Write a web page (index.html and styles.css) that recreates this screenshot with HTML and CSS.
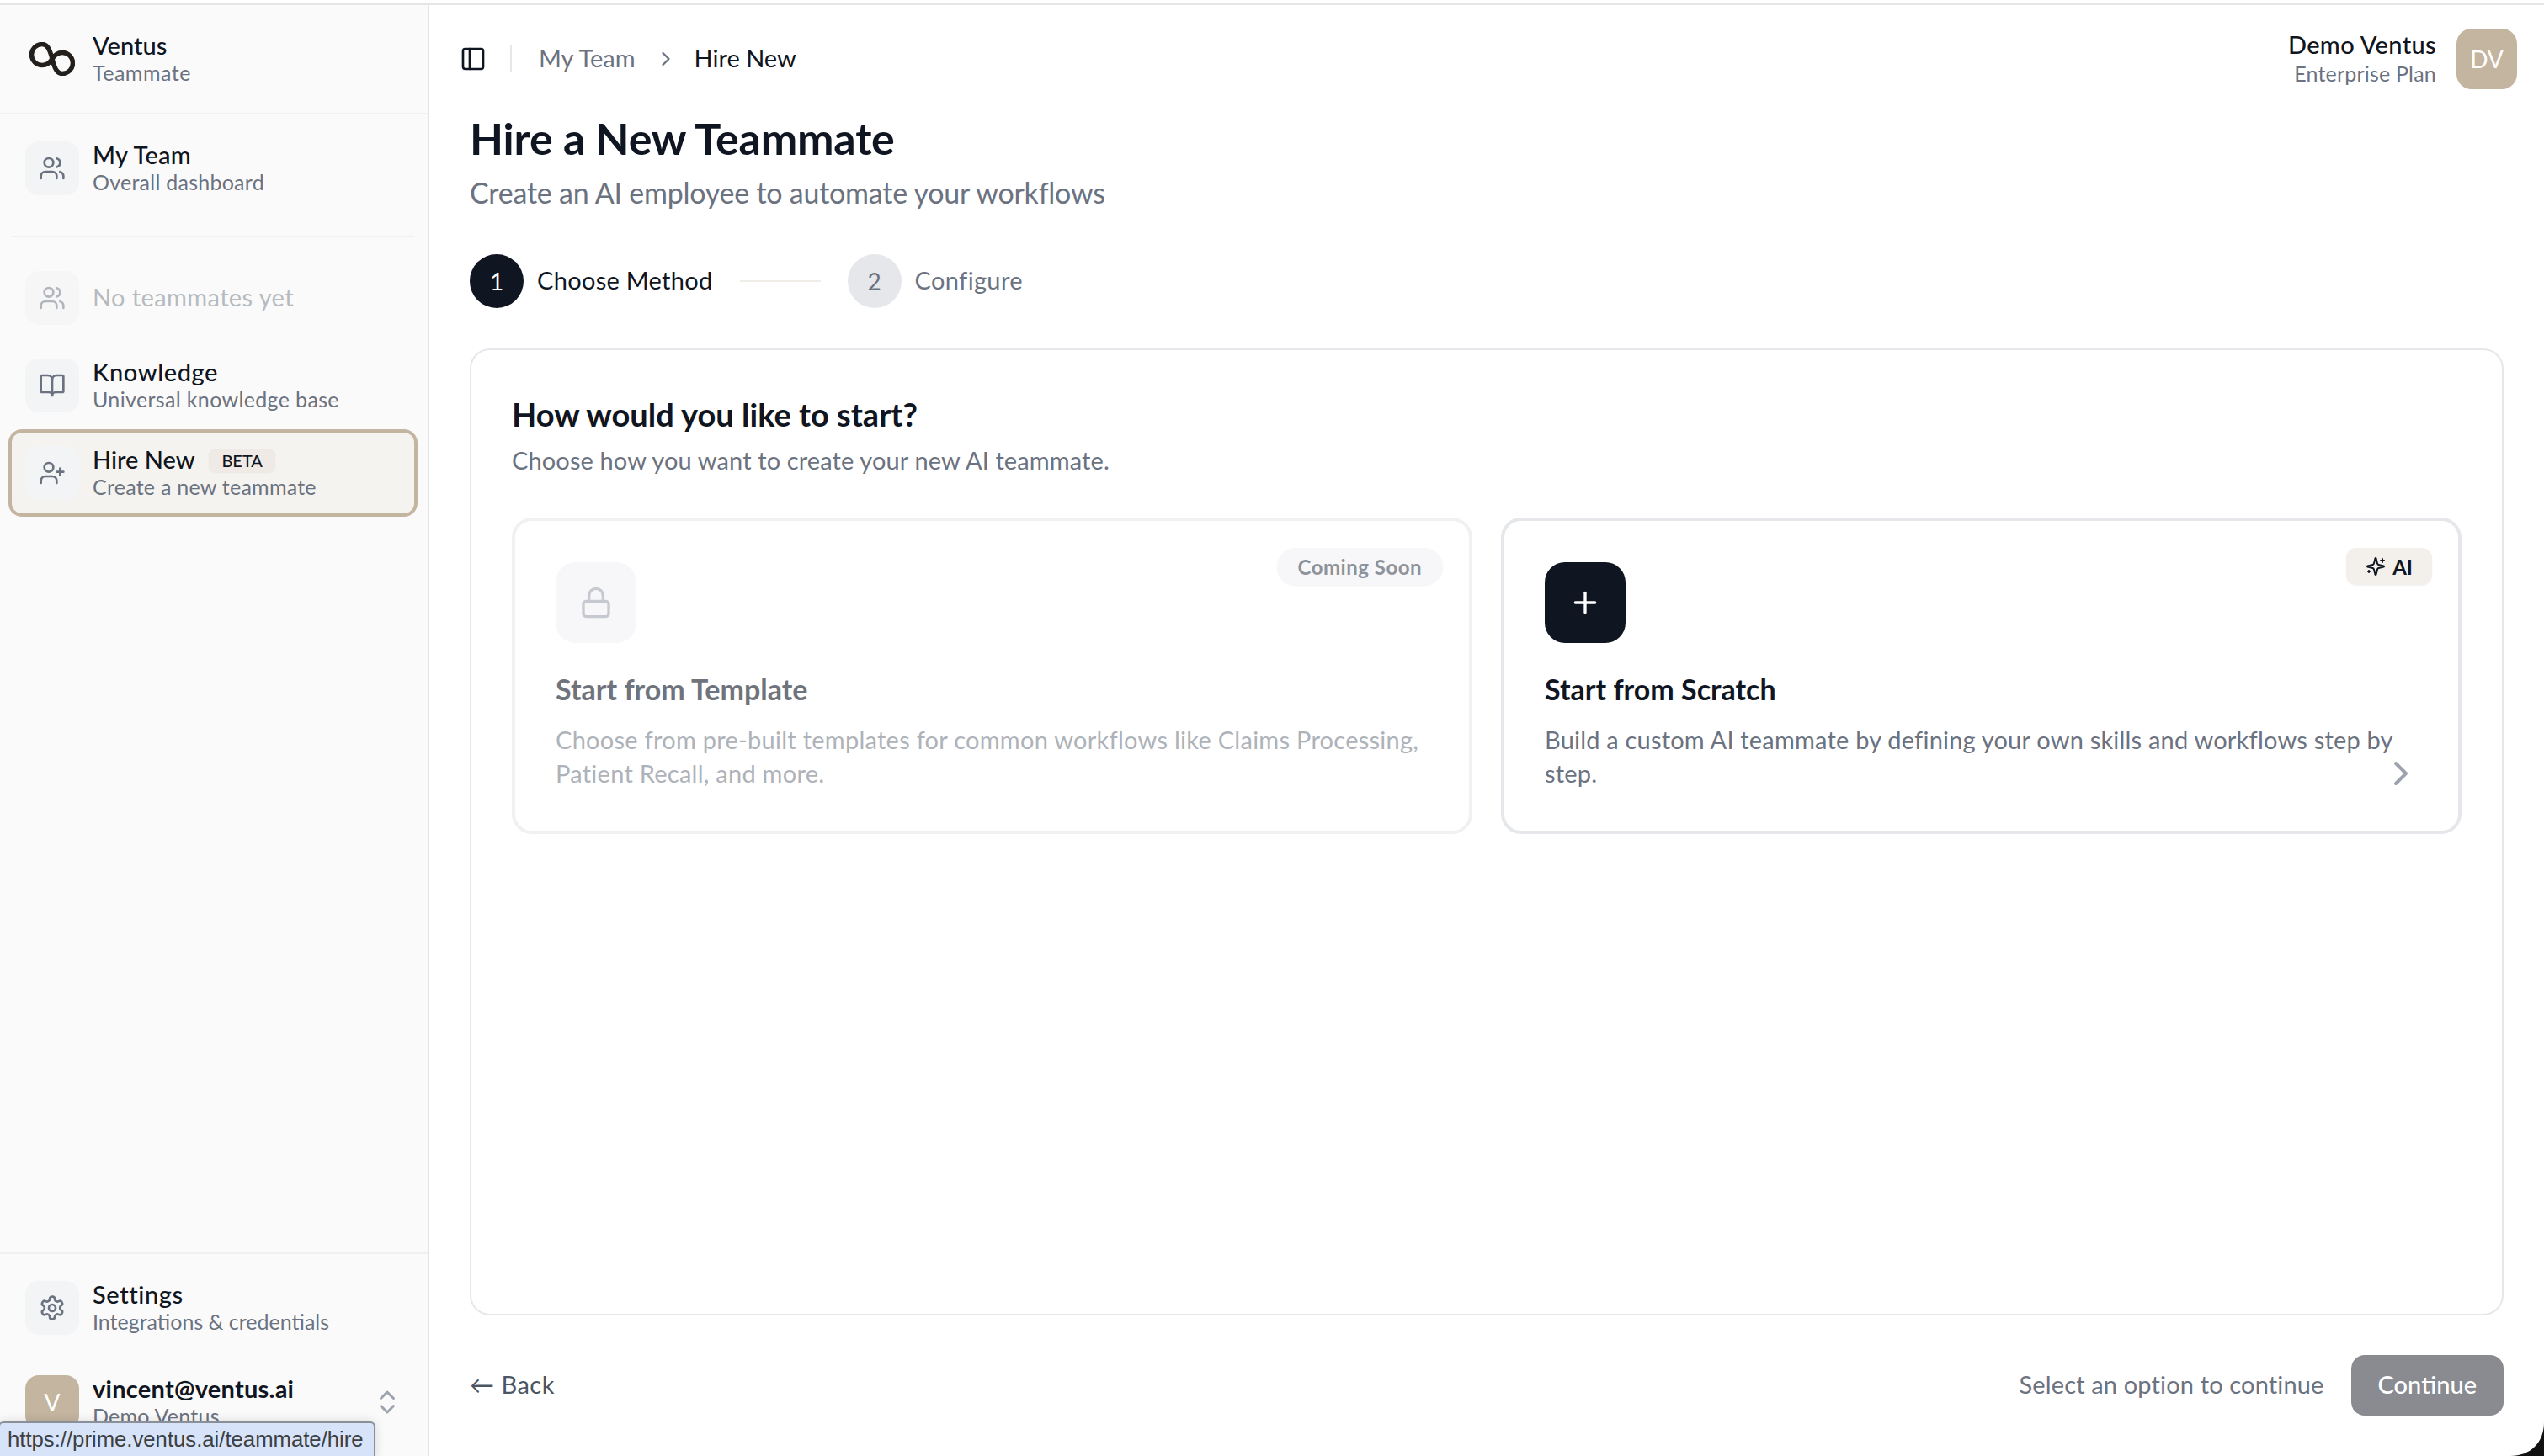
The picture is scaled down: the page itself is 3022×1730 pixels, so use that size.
FILE: index.html
```html
<!DOCTYPE html>
<html lang="en">
<head>
  <meta charset="UTF-8">
  <title>Hire New</title>
  <link rel="stylesheet" href="styles.css">
</head>
<body>

  <div class="app">

    <!-- sidebar -->
    <aside class="sidebar">
      <div class="brand">
        <svg class="logo" viewBox="0 0 54 40" fill="none" stroke="#231f1c" stroke-width="5.5"><path d="M15 2.5C21 2.5 24 8 27 20C30 32 33 37.5 39 37.5C46 37.5 51.5 32 51.5 25C51.5 18 46 12.5 39 12.5C33 12.5 30 15 27 20C24 25 21 27.5 15 27.5C8 27.5 2.5 22 2.5 15C2.5 8 8 2.5 15 2.5Z"/></svg>
        <div class="item-text">
          <div class="item-title title-brand">Ventus</div>
          <div class="item-sub sub-brand">Teammate</div>
        </div>
      </div>

      <div class="nav-top">
        <div class="nav-item">
          <span class="nav-icon">
            <svg class="icon" viewBox="0 0 24 24"><path d="M16 21v-2a4 4 0 0 0-4-4H6a4 4 0 0 0-4 4v2"/><circle cx="9" cy="7" r="4"/><path d="M22 21v-2a4 4 0 0 0-3-3.87"/><path d="M16 3.13a4 4 0 0 1 0 7.75"/></svg>
          </span>
          <div class="item-text">
            <div class="item-title title-team">My Team</div>
            <div class="item-sub sub-team">Overall dashboard</div>
          </div>
        </div>
      </div>

      <div class="nav-divider"></div>

      <div class="nav-list">
        <div class="nav-item nav-empty">
          <span class="nav-icon">
            <svg class="icon" viewBox="0 0 24 24"><path d="M16 21v-2a4 4 0 0 0-4-4H6a4 4 0 0 0-4 4v2"/><circle cx="9" cy="7" r="4"/><path d="M22 21v-2a4 4 0 0 0-3-3.87"/><path d="M16 3.13a4 4 0 0 1 0 7.75"/></svg>
          </span>
          <div class="item-title title-empty">No teammates yet</div>
        </div>

        <div class="nav-item">
          <span class="nav-icon">
            <svg class="icon" viewBox="0 0 24 24"><path d="M12 7v14"/><path d="M3 18a1 1 0 0 1-1-1V4a1 1 0 0 1 1-1h5a4 4 0 0 1 4 4 4 4 0 0 1 4-4h5a1 1 0 0 1 1 1v13a1 1 0 0 1-1 1h-6a3 3 0 0 0-3 3 3 3 0 0 0-3-3z"/></svg>
          </span>
          <div class="item-text">
            <div class="item-title title-know">Knowledge</div>
            <div class="item-sub sub-know">Universal knowledge base</div>
          </div>
        </div>

        <div class="nav-item nav-active">
          <span class="nav-icon">
            <svg class="icon" viewBox="0 0 24 24"><path d="M16 21v-2a4 4 0 0 0-4-4H6a4 4 0 0 0-4 4v2"/><circle cx="9" cy="7" r="4"/><line x1="19" y1="8" x2="19" y2="14"/><line x1="22" y1="11" x2="16" y2="11"/></svg>
          </span>
          <div class="item-text">
            <div class="item-title title-hire">Hire New <span class="beta">BETA</span></div>
            <div class="item-sub sub-hire">Create a new teammate</div>
          </div>
        </div>
      </div>

      <div class="sidebar-foot">
        <div class="nav-item">
          <span class="nav-icon">
            <svg class="icon" viewBox="0 0 24 24"><path d="M12.22 2h-.44a2 2 0 0 0-2 2v.18a2 2 0 0 1-1 1.73l-.43.25a2 2 0 0 1-2 0l-.15-.08a2 2 0 0 0-2.73.73l-.22.38a2 2 0 0 0 .73 2.73l.15.1a2 2 0 0 1 1 1.72v.51a2 2 0 0 1-1 1.74l-.15.09a2 2 0 0 0-.73 2.73l.22.38a2 2 0 0 0 2.73.73l.15-.08a2 2 0 0 1 2 0l.43.25a2 2 0 0 1 1 1.73V20a2 2 0 0 0 2 2h.44a2 2 0 0 0 2-2v-.18a2 2 0 0 1 1-1.73l.43-.25a2 2 0 0 1 2 0l.15.08a2 2 0 0 0 2.73-.73l.22-.39a2 2 0 0 0-.73-2.73l-.15-.08a2 2 0 0 1-1-1.74v-.5a2 2 0 0 1 1-1.74l.15-.09a2 2 0 0 0 .73-2.73l-.22-.38a2 2 0 0 0-2.73-.73l-.15.08a2 2 0 0 1-2 0l-.43-.25a2 2 0 0 1-1-1.73V4a2 2 0 0 0-2-2z"/><circle cx="12" cy="12" r="3"/></svg>
          </span>
          <div class="item-text">
            <div class="item-title title-settings">Settings</div>
            <div class="item-sub sub-settings">Integrations &amp; credentials</div>
          </div>
        </div>

        <div class="nav-item nav-user">
          <span class="nav-icon user-avatar">V</span>
          <div class="item-text">
            <div class="item-title title-user">vincent@ventus.ai</div>
            <div class="item-sub sub-user">Demo Ventus</div>
          </div>
          <svg class="updown" viewBox="0 0 24 24"><path d="m7 15 5 5 5-5"/><path d="m7 9 5-5 5 5"/></svg>
        </div>
      </div>
    </aside>

    <!-- main -->
    <main class="main">
      <header class="topbar">
        <svg class="toggle" viewBox="0 0 24 24"><rect x="3" y="3" width="18" height="18" rx="2"/><path d="M9 3v18"/></svg>
        <span class="topbar-sep"></span>
        <span class="crumb">My Team</span>
        <svg class="crumb-chevron" viewBox="0 0 24 24"><path d="m9 18 6-6-6-6"/></svg>
        <span class="crumb crumb-current">Hire New</span>
        <div class="account">
          <div class="account-text">
            <div class="account-name">Demo Ventus</div>
            <div class="account-plan">Enterprise Plan</div>
          </div>
          <span class="account-avatar">DV</span>
        </div>
      </header>

      <div class="page">
        <h1>Hire a New Teammate</h1>
        <p class="subtitle">Create an AI employee to automate your workflows</p>

        <div class="steps">
          <span class="step-num step-on">1</span>
          <span class="step-label label-on">Choose Method</span>
          <span class="step-line"></span>
          <span class="step-num">2</span>
          <span class="step-label label-next">Configure</span>
        </div>

        <section class="panel">
          <h2>How would you like to start?</h2>
          <p class="panel-sub">Choose how you want to create your new AI teammate.</p>

          <div class="options">
            <div class="option option-off">
              <span class="tag tag-soon">Coming Soon</span>
              <span class="option-icon">
                <svg class="icon-lg" viewBox="0 0 24 24"><rect x="3" y="11" width="18" height="11" rx="2"/><path d="M7 11V7a5 5 0 0 1 10 0v4"/></svg>
              </span>
              <h3>Start from Template</h3>
              <p>Choose from pre-built templates for common workflows like Claims Processing, Patient Recall, and more.</p>
            </div>

            <div class="option">
              <span class="tag tag-ai">
                <svg class="sparkle" viewBox="0 0 24 24"><path d="M9.94 15.5A2 2 0 0 0 8.5 14.06l-6.14-1.58a.5.5 0 0 1 0-.96L8.5 9.94A2 2 0 0 0 9.94 8.5l1.58-6.14a.5.5 0 0 1 .96 0L14.06 8.5A2 2 0 0 0 15.5 9.94l6.14 1.58a.5.5 0 0 1 0 .96L15.5 14.06a2 2 0 0 0-1.44 1.44l-1.58 6.14a.5.5 0 0 1-.96 0z"/><path d="M20 3v4"/><path d="M22 5h-4"/><path d="M4 17v2"/><path d="M5 18H3"/></svg>
                AI
              </span>
              <span class="option-icon icon-dark">
                <svg class="icon-lg" viewBox="0 0 24 24"><path d="M5 12h14"/><path d="M12 5v14"/></svg>
              </span>
              <h3>Start from Scratch</h3>
              <p class="scratch-text">Build a custom AI teammate by defining your own skills and workflows step by step.</p>
              <svg class="option-chevron" viewBox="0 0 24 24"><path d="m9 18 6-6-6-6"/></svg>
            </div>
          </div>
        </section>

        <footer class="page-foot">
          <span class="back"><span class="back-arrow">←</span> Back</span>
          <span class="hint">Select an option to continue</span>
          <button class="continue-btn">Continue</button>
        </footer>
      </div>
    </main>
  </div>

  <!-- link preview and window corner lie over the page -->
  <div class="link-tip">https://prime.ventus.ai/teammate/hire</div>
  <svg class="corner" viewBox="0 0 40 40"><path d="M40 0V40H0C24 40 40 24 40 0Z" fill="#111"/></svg>

</body>
</html>
```

FILE: styles.css
```css
* {
  box-sizing: border-box;
}

html, body {
  margin: 0;
  height: 1730px;
  overflow: hidden;
  background: #fff;
}

body {
  position: relative;
  padding-top: 4px;
  font-family: "Lato", "Open Sans", sans-serif;
  color: #0f1521;
}

.app {
  display: flex;
  height: 1726px;
  border-top: 2px solid #e5e5e5;
}

/* sidebar */
.sidebar {
  width: 510px;
  flex-shrink: 0;
  display: flex;
  flex-direction: column;
  background: #fafafa;
  border-right: 2px solid #e5e5e5;
}

.brand {
  height: 130px;
  flex-shrink: 0;
  display: flex;
  align-items: center;
  gap: 21px;
  padding-left: 35px;
  border-bottom: 2px solid #f0f0f0;
}

.logo {
  width: 54px;
  height: 40px;
}

.nav-top {
  padding: 32px 0 48px;
}

.nav-divider {
  height: 2px;
  flex-shrink: 0;
  margin: 0 16px 0 14px;
  background: #f0f0f0;
}

.nav-list {
  display: flex;
  flex-direction: column;
  padding-top: 40px;
}

.nav-item {
  display: flex;
  align-items: center;
  gap: 16px;
  height: 64px;
  padding: 0 20px 0 30px;
}

.nav-empty {
  margin-bottom: 40px;
}

.nav-list .nav-active {
  height: 104px;
  margin: 20px 12px 0 10px;
  padding-left: 16px;
  background: #f5f3ef;
  border: 4px solid #c4b5a0;
  border-radius: 16px;
}

.nav-icon {
  width: 64px;
  height: 64px;
  flex-shrink: 0;
  display: flex;
  align-items: center;
  justify-content: center;
  background: #f3f4f6;
  border-radius: 16px;
}

.icon {
  width: 32px;
  height: 32px;
  fill: none;
  stroke: #6b7280;
  stroke-width: 2;
  stroke-linecap: round;
  stroke-linejoin: round;
}

.nav-empty .nav-icon {
  opacity: 0.5;
}

.item-text {
  min-width: 0;
  padding-bottom: 2px;
}

.item-title {
  font-size: 29px;
  line-height: 36px;
  font-weight: 500;
  color: #0f1521;
}

.item-sub {
  margin-top: -2px;
  font-size: 25px;
  line-height: 32px;
  letter-spacing: 0.25px;
  color: #6b7280;
}

.title-team {
  letter-spacing: 0.3px;
}

.title-know,
.title-settings {
  letter-spacing: 0.6px;
}

.sub-brand {
  letter-spacing: 0.5px;
}

.sub-know {
  letter-spacing: 0.35px;
}

.sub-settings {
  letter-spacing: 0;
}

.title-empty {
  padding-bottom: 2px;
  color: #b6bac1;
  font-weight: 400;
  letter-spacing: 0.4px;
}

.beta {
  display: inline-block;
  vertical-align: 2px;
  margin-left: 10px;
  padding: 0 15px;
  height: 28px;
  line-height: 28px;
  font-size: 20px;
  font-weight: 500;
  letter-spacing: 0;
  background: #efeae5;
  border-radius: 8px;
  box-shadow: 0 1px 2px rgba(0, 0, 0, 0.05);
}

.sidebar-foot {
  margin-top: auto;
  border-top: 2px solid #f0f0f0;
  padding-top: 32px;
}

.nav-user {
  margin-top: 48px;
  margin-bottom: 32px;
}

.user-avatar {
  background: #c4b5a0;
  color: #fff;
  font-size: 28px;
}

.title-user {
  font-weight: 700;
  letter-spacing: 0.25px;
}

.updown {
  width: 36px;
  height: 36px;
  margin-left: auto;
  margin-right: 10px;
  fill: none;
  stroke: #9ca3af;
  stroke-width: 2;
  stroke-linecap: round;
  stroke-linejoin: round;
}

/* main */
.main {
  flex: 1;
  min-width: 0;
  display: flex;
  flex-direction: column;
}

.topbar {
  height: 128px;
  flex-shrink: 0;
  display: flex;
  align-items: center;
  padding: 0 32px 0 36px;
}

.toggle {
  width: 32px;
  height: 32px;
  fill: none;
  stroke: #0f1521;
  stroke-width: 2;
  stroke-linecap: round;
  stroke-linejoin: round;
}

.topbar-sep {
  width: 2px;
  height: 32px;
  margin: 0 32px 0 28px;
  background: #e5e7eb;
}

.crumb {
  padding-bottom: 3px;
  font-size: 29px;
  color: #6b7280;
}

.crumb-current {
  color: #0f1521;
}

.crumb-chevron {
  width: 28px;
  height: 28px;
  margin: 0 20px 0 22px;
  fill: none;
  stroke: #6b7280;
  stroke-width: 2;
  stroke-linecap: round;
  stroke-linejoin: round;
}

.account {
  margin-left: auto;
  display: flex;
  align-items: center;
  gap: 24px;
}

.account-text {
  padding-bottom: 2px;
  text-align: right;
}

.account-name {
  font-size: 29px;
  line-height: 36px;
  font-weight: 500;
  letter-spacing: 0.35px;
}

.account-plan {
  font-size: 25px;
  line-height: 32px;
  letter-spacing: 0.2px;
  color: #6b7280;
}

.account-avatar {
  width: 72px;
  height: 72px;
  display: flex;
  align-items: center;
  justify-content: center;
  background: #c4b5a0;
  border-radius: 18px;
  color: #fff;
  font-size: 28px;
}

.page {
  flex: 1;
  min-height: 0;
  display: flex;
  flex-direction: column;
  padding: 0 48px;
  padding-bottom: 48px;
}

h1 {
  margin: 0;
  font-size: 52px;
  line-height: 60px;
  font-weight: 700;
  letter-spacing: -0.2px;
}

.subtitle {
  margin: 11px 0 0;
  font-size: 34px;
  line-height: 48px;
  letter-spacing: -0.24px;
  color: #6b7280;
}

.steps {
  display: flex;
  align-items: center;
  margin-top: 49px;
}

.step-num {
  width: 64px;
  height: 64px;
  display: flex;
  align-items: center;
  justify-content: center;
  border-radius: 50%;
  background: #e5e7eb;
  color: #6b7280;
  font-size: 28px;
}

.step-on {
  background: #0f1521;
  color: #fff;
}

.step-label {
  margin-left: 16px;
  padding-bottom: 3px;
  font-size: 29px;
  color: #6b7280;
}

.label-on {
  color: #0f1521;
  letter-spacing: 0.3px;
}

.label-next {
  letter-spacing: 0.35px;
}

.step-line {
  width: 96px;
  height: 2px;
  margin: 0 32px;
  background: #f0ede8;
}

.panel {
  flex: 1;
  min-height: 0;
  margin-top: 48px;
  padding: 50px 48px 0;
  border: 2px solid #e5e7eb;
  border-radius: 24px;
}

h2 {
  margin: 0;
  font-size: 38px;
  line-height: 52px;
  font-weight: 700;
}

.panel-sub {
  margin: 9px 0 0;
  font-size: 29px;
  line-height: 40px;
  letter-spacing: 0.12px;
  color: #6b7280;
}

.options {
  display: grid;
  grid-template-columns: 1fr 1fr;
  gap: 34px;
  margin-top: 48px;
}

.option {
  position: relative;
  height: 376px;
  padding: 49px 48px 48px;
  background: #fff;
  border: 4px solid #e5e7eb;
  border-radius: 24px;
}

.option-off {
  border-color: #f0f1f3;
}

.option-icon {
  width: 96px;
  height: 96px;
  display: flex;
  align-items: center;
  justify-content: center;
  background: #f7f7f9;
  border-radius: 24px;
}

.icon-lg {
  width: 40px;
  height: 40px;
  fill: none;
  stroke: #c6c9cf;
  stroke-width: 2;
  stroke-linecap: round;
  stroke-linejoin: round;
}

.icon-dark {
  background: #0f1521;
}

.icon-dark .icon-lg {
  stroke: #fff;
}

h3 {
  margin: 33px 0 0;
  font-size: 34px;
  line-height: 44px;
  font-weight: 700;
}

.option p {
  margin: 18px 0 0;
  font-size: 29px;
  line-height: 40px;
  letter-spacing: 0.26px;
  color: #6b7280;
}

.option .scratch-text {
  letter-spacing: 0.2px;
}

.option-off h3 {
  color: #6f747c;
}

.option-off p {
  color: #aeb2b9;
}

.tag {
  position: absolute;
  top: 32px;
  right: 31px;
  height: 44px;
  display: flex;
  align-items: center;
  gap: 8px;
  font-size: 24px;
  font-weight: 700;
  box-shadow: 0 1px 2px rgba(0, 0, 0, 0.05);
}

.tag-soon {
  padding: 0 25px;
  background: #f7f7f9;
  border-radius: 22px;
  color: #8e939b;
  letter-spacing: 0.5px;
}

.tag-ai {
  padding: 0 23px;
  background: #f3f0eb;
  border-radius: 12px;
}

.sparkle {
  width: 24px;
  height: 24px;
  fill: none;
  stroke: #0f1521;
  stroke-width: 2;
  stroke-linecap: round;
  stroke-linejoin: round;
}

.option-chevron {
  position: absolute;
  right: 44px;
  bottom: 44px;
  width: 48px;
  height: 48px;
  fill: none;
  stroke: #9ca3af;
  stroke-width: 2;
  stroke-linecap: round;
  stroke-linejoin: round;
}

.page-foot {
  display: flex;
  align-items: center;
  margin-top: 47px;
  height: 72px;
  flex-shrink: 0;
}

.back {
  padding-bottom: 3px;
  font-size: 29px;
  letter-spacing: 0.5px;
  color: #4b5563;
}

.hint {
  margin-left: auto;
  padding-bottom: 3px;
  font-size: 29px;
  letter-spacing: 0.15px;
  color: #6b7280;
}

.continue-btn {
  height: 72px;
  margin-left: 32px;
  padding: 0 32px 3px;
  background: #898b91;
  border: none;
  border-radius: 16px;
  color: #fff;
  font-family: inherit;
  font-size: 29px;
  font-weight: 500;
}

/* browser link preview */
.link-tip {
  position: absolute;
  left: -2px;
  top: 1689px;
  width: 448px;
  height: 46px;
  padding: 4px 0 0 9px;
  background: #d6e3f9;
  border: 2px solid #8a8f98;
  border-radius: 6px;
  box-shadow: 0 0 12px rgba(0, 0, 0, 0.15);
  font-family: "Liberation Sans", sans-serif;
  font-size: 25.7px;
  line-height: 30px;
  color: #3c4043;
  white-space: nowrap;
}

.corner {
  position: absolute;
  right: 0;
  bottom: 0;
  width: 40px;
  height: 40px;
}
```
